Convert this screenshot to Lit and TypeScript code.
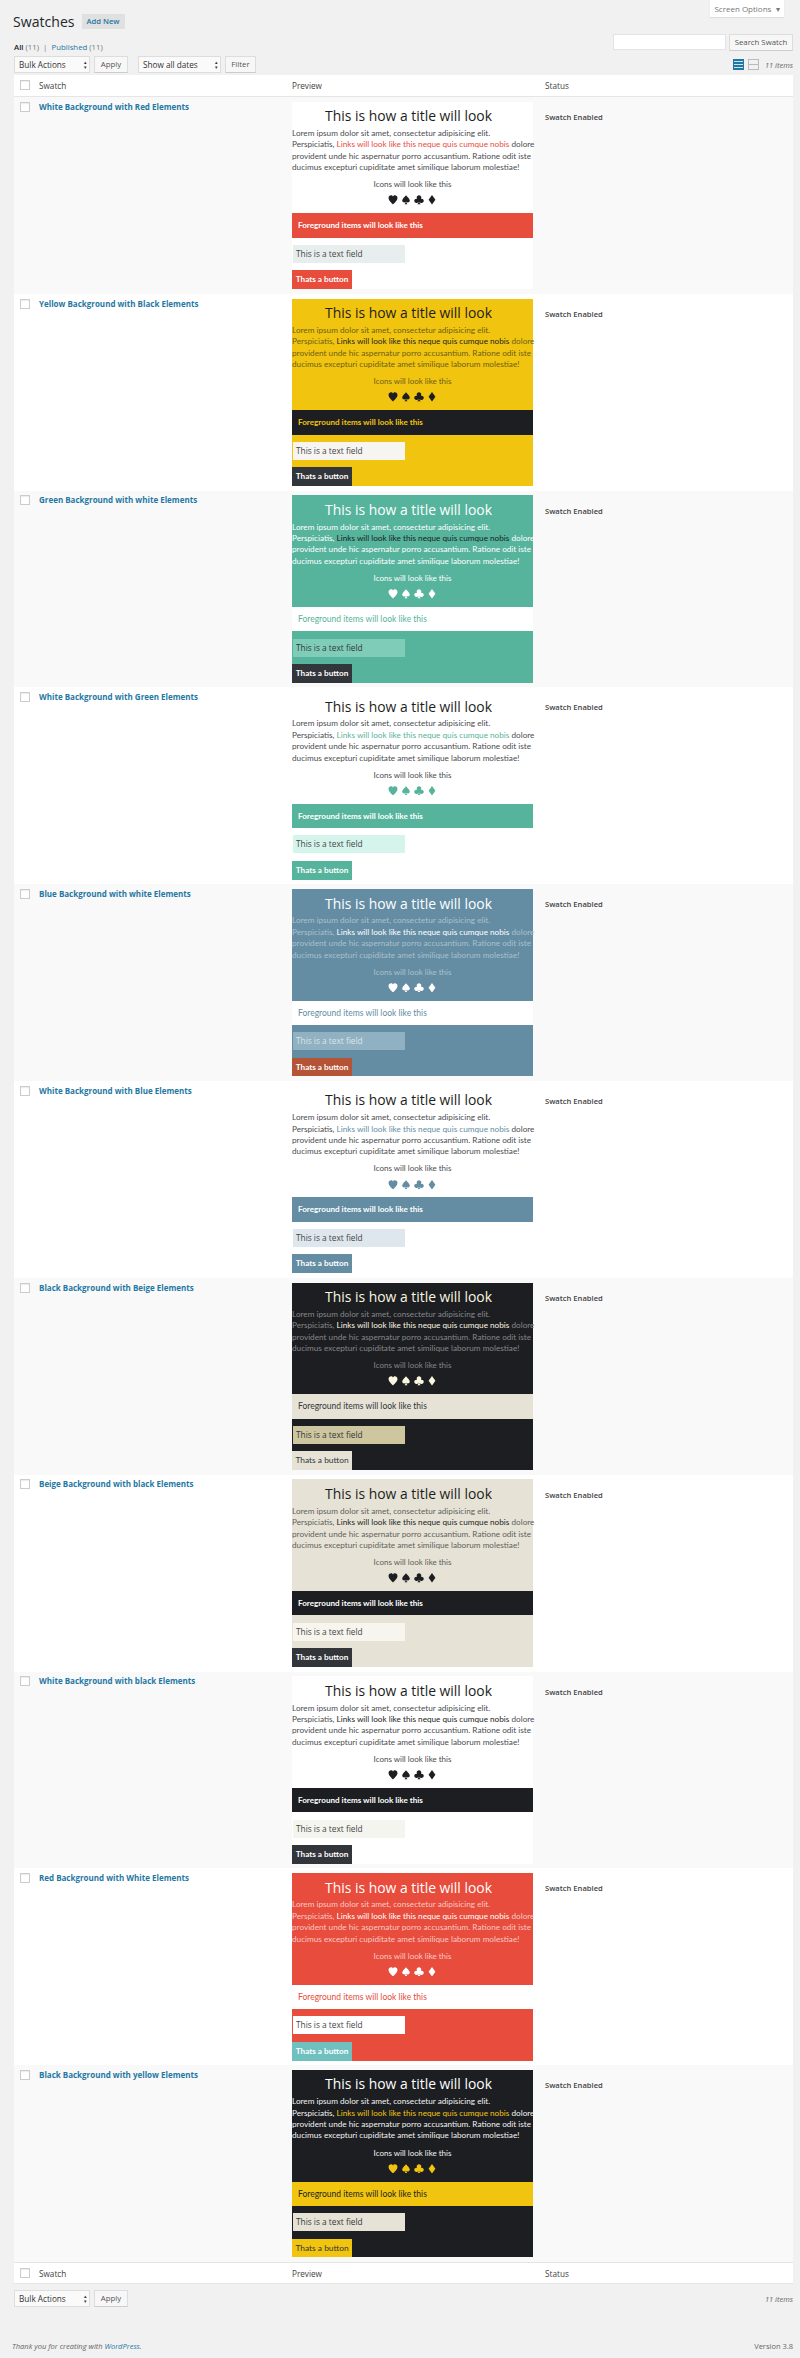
import { LitElement, html, css, svg } from 'lit';
import { customElement } from 'lit/decorators.js';

interface Swatch {
    name: string;
    bg: string; title: string; text: string; link: string; icon: string;
    band: string; bandText: string; field: string; fieldText: string;
    btn: string; btnText: string;
}

const swatches: Swatch[] = [
    { name: 'White Background with Red Elements', bg: '#fff', title: '#1c1e21', text: '#4a4c50', link: '#e74c3c', icon: '#1c1e21', band: '#e74c3c', bandText: '#fff', field: '#e8eeee', fieldText: '#444', btn: '#e74c3c', btnText: '#fff' },
    { name: 'Yellow Background with Black Elements', bg: '#f1c40f', title: '#1c1e21', text: '#6e5f17', link: '#1c1e21', icon: '#1c1e21', band: '#1c1e21', bandText: '#f1c40f', field: '#f7f5f2', fieldText: '#444', btn: '#32353a', btnText: '#fff' },
    { name: 'Green Background with white Elements', bg: '#56b39c', title: '#fff', text: '#fff', link: '#1c1e21', icon: '#fff', band: '#fff', bandText: '#56b39c', field: '#7fcdb9', fieldText: '#33353a', btn: '#32353a', btnText: '#fff' },
    { name: 'White Background with Green Elements', bg: '#fff', title: '#1c1e21', text: '#4a4c50', link: '#56b39c', icon: '#56b39c', band: '#56b39c', bandText: '#fff', field: '#d5f4ec', fieldText: '#444', btn: '#56b39c', btnText: '#fff' },
    { name: 'Blue Background with white Elements', bg: '#648da3', title: '#fff', text: '#a9c0cc', link: '#fff', icon: '#fff', band: '#fff', bandText: '#648da3', field: '#90b1c2', fieldText: '#dce6eb', btn: '#b55336', btnText: '#fff' },
    { name: 'White Background with Blue Elements', bg: '#fff', title: '#1c1e21', text: '#4a4c50', link: '#648da3', icon: '#648da3', band: '#648da3', bandText: '#fff', field: '#dde7ed', fieldText: '#444', btn: '#648da3', btnText: '#fff' },
    { name: 'Black Background with Beige Elements', bg: '#1c1e21', title: '#fbf6e0', text: '#85878a', link: '#fbf6e0', icon: '#fbf6e0', band: '#e6e3d6', bandText: '#33353a', field: '#cdc69f', fieldText: '#33353a', btn: '#e6e3d6', btnText: '#33353a' },
    { name: 'Beige Background with black Elements', bg: '#e6e3d6', title: '#1c1e21', text: '#5f5f5c', link: '#1c1e21', icon: '#1c1e21', band: '#1c1e21', bandText: '#fff', field: '#f7f5ee', fieldText: '#444', btn: '#32353a', btnText: '#fff' },
    { name: 'White Background with black Elements', bg: '#fff', title: '#1c1e21', text: '#4a4c50', link: '#1c1e21', icon: '#1c1e21', band: '#1c1e21', bandText: '#fff', field: '#f5f5f0', fieldText: '#444', btn: '#32353a', btnText: '#fff' },
    { name: 'Red Background with White Elements', bg: '#e74c3c', title: '#fff', text: '#f8c9c4', link: '#fff', icon: '#fff', band: '#fff', bandText: '#e74c3c', field: '#fff', fieldText: '#444', btn: '#6fc0bf', btnText: '#fff' },
    { name: 'Black Background with yellow Elements', bg: '#1c1e21', title: '#fff', text: '#f2f2f2', link: '#f1c40f', icon: '#f1c40f', band: '#f1c40f', bandText: '#1c1e21', field: '#e6e3d6', fieldText: '#33353a', btn: '#f1c40f', btnText: '#33353a' },
];

const suits = [
    svg`<path d="M5 10C3.5 8.3 0.3 6 0.3 3.2 0.3 1.4 1.6 0.3 3 0.3 3.9 0.3 4.6 0.8 5 1.6 5.4 0.8 6.1 0.3 7 0.3 8.4 0.3 9.7 1.4 9.7 3.2 9.7 6 6.5 8.3 5 10Z"/>`,
    svg`<path d="M5 0.2C6.2 2 9 3.6 9 5.9 9 7.3 7.9 8 7 8 6.3 8 5.8 7.7 5.4 7.2 5.5 8.2 5.9 9.2 6.6 9.8H3.4C4.1 9.2 4.5 8.2 4.6 7.2 4.2 7.7 3.7 8 3 8 2.1 8 1 7.3 1 5.9 1 3.6 3.8 2 5 0.2Z"/>`,
    svg`<path d="M5 0.2C6.4 0.2 7.4 1.3 7.4 2.5 7.4 3 7.2 3.5 7 3.9 8.6 3.6 10 4.6 10 6 10 7.4 8.9 8.3 7.8 8.3 6.9 8.3 6 7.8 5.5 7 5.6 8.2 6 9.2 6.8 9.8H3.2C4 9.2 4.4 8.2 4.5 7 4 7.8 3.1 8.3 2.2 8.3 1.1 8.3 0 7.4 0 6 0 4.6 1.4 3.6 3 3.9 2.8 3.5 2.6 3 2.6 2.5 2.6 1.3 3.6 0.2 5 0.2Z"/>`,
    svg`<path d="M5 0L8.6 5 5 10 1.4 5Z"/>`,
];

const listIcon = svg`<svg width="11" height="11" viewBox="0 0 11 11"><rect width="11" height="11" fill="#1f78a4"/><path d="M1 2.5h9M1 5.5h9M1 8.5h9" stroke="#cfe4ee" stroke-width="1"/></svg>`;
const excerptIcon = svg`<svg width="11" height="11" viewBox="0 0 11 11"><rect width="11" height="11" fill="#bbb"/><rect x="1" y="1" width="9" height="4" fill="#f1f1f1"/><rect x="1" y="6" width="9" height="4" fill="#f1f1f1"/></svg>`;

const isLight = (c: string) => c === '#fff' || c === '#f1c40f';

@customElement('swatch-preview')
export class SwatchPreview extends LitElement {
    static properties = { swatch: { attribute: false } };
    swatch!: Swatch;

    static styles = css`
        :host { display: block; width: 241px; }
        .preview {
            height: 187.4px;
            font-family: Lato, sans-serif;
            font-size: 8.2px;
            line-height: 11.4px;
        }
        h2 {
            margin: 0;
            padding: 5.5px 8px 0 0;
            height: 26.3px;
            box-sizing: border-box;
            font-family: "Open Sans", sans-serif;
            font-size: 13.9px;
            line-height: 18px;
            font-weight: 400;
            text-align: center;
        }
        p { margin: 0; white-space: nowrap; }
        .cap { margin-top: 5.7px; text-align: center; font-size: 8px; }
        .icons {
            display: flex;
            justify-content: center;
            gap: 3.3px;
            margin-top: 2px;
            height: 15px;
            align-items: center;
        }
        .icons svg { width: 10px; height: 9.5px; fill: currentColor; }
        .band {
            margin-top: 5.6px;
            height: 24.4px;
            padding-left: 6px;
            font-size: 8.5px;
            line-height: 24.4px;
            box-sizing: border-box;
        }
        .field {
            margin: 7.3px 0 7.3px 0.7px;
            width: 112px;
            height: 18px;
            padding-left: 3.3px;
            box-sizing: border-box;
            font-family: "Open Sans", sans-serif;
            font-size: 8.3px;
            line-height: 18px;
        }
        .btn {
            width: 60px;
            height: 18.8px;
            text-align: center;
            font-size: 8.4px;
            line-height: 18.8px;
        }
        .band.strong { font-size: 8.1px; font-weight: 700; }
        .btn.strong { font-size: 8.2px; font-weight: 700; }
    `;

    render() {
        const s = this.swatch;
        return html`
            <div class="preview" style="background:${s.bg};color:${s.text}">
                <h2 style="color:${s.title}">This is how a title will look</h2>
                <p>Lorem ipsum dolor sit amet, consectetur adipisicing elit.<br>Perspiciatis, <span style="color:${s.link}">Links will look like this neque quis cumque nobis</span> dolore<br>provident unde hic aspernatur porro accusantium. Ratione odit iste<br>ducimus excepturi cupiditate amet similique laborum molestiae!</p>
                <div class="cap">Icons will look like this</div>
                <div class="icons" style="color:${s.icon}">${suits.map((d) => html`<svg viewBox="0 0 10 10">${d}</svg>`)}</div>
                <div class="band ${isLight(s.bandText) ? 'strong' : ''}" style="background:${s.band};color:${s.bandText}">Foreground items will look like this</div>
                <div class="field" style="background:${s.field};color:${s.fieldText}">This is a text field</div>
                <div class="btn ${s.btnText === '#fff' ? 'strong' : ''}" style="background:${s.btn};color:${s.btnText}">Thats a button</div>
            </div>
        `;
    }
}

@customElement('app-root')
export class AppRoot extends LitElement {
    static styles = css`
        :host {
            display: block;
            position: relative;
            height: 2358px;
            background: #f1f1f1;
            font-family: "Open Sans", sans-serif;
            font-size: 7.8px;
            color: #444;
            overflow: hidden;
        }
        .wrap { padding: 0 7px 0 14px; }
        .screen-options {
            position: absolute;
            top: 0;
            right: 16px;
            width: 74px;
            height: 17px;
            background: #fff;
            box-shadow: 0 1px 1px rgba(0,0,0,.08);
            color: #777;
            font-size: 8px;
            line-height: 17px;
            text-align: center;
        }
        .head {
            display: flex;
            align-items: center;
            gap: 7px;
            height: 42px;
            margin-left: -1px;
        }
        h1 { margin: 0; font-size: 14.1px; font-weight: 400; color: #23282d; }
        .add {
            width: 43px;
            height: 15px;
            background: #e0e0e0;
            color: #1f78a4;
            font-weight: 600;
            font-size: 7.6px;
            line-height: 15px;
            text-align: center;
        }
        .subrow { display: flex; justify-content: space-between; height: 14px; }
        .subs { line-height: 10px; color: #777; }
        .subs b { color: #222; font-weight: 600; }
        .subs a { color: #1f78a4; }
        .search { display: flex; gap: 3px; margin-top: -8px; height: 16px; }
        .search i { display: block; width: 113px; height: 16px; background: #fff; box-sizing: border-box; border: 1px solid #e3e3e3; }
        .nav { display: flex; align-items: center; gap: 4px; height: 17px; }
        .sel {
            position: relative;
            box-sizing: border-box;
            height: 17px;
            background: #fafafa;
            border: 1px solid #ddd;
            padding-left: 4px;
            line-height: 15px;
            color: #333;
            font-size: 8.2px;
        }
        .sel::after {
            content: "\\25B4\\A\\25BE";
            white-space: pre;
            position: absolute;
            right: 2px;
            top: 3px;
            font-size: 5px;
            line-height: 4.5px;
            color: #333;
        }
        .btn {
            box-sizing: border-box;
            height: 17px;
            background: #f7f7f7;
            border: 1px solid #ddd;
            border-bottom-color: #ccc;
            line-height: 15px;
            text-align: center;
            color: #555;
        }
        .bulk { width: 76px; }
        .apply { width: 34px; }
        .dates { width: 83px; margin-left: 6px; }
        .filter { width: 31px; }
        .spacer { flex: 1; }
        .items { font-style: italic; color: #666; font-size: 7.5px; }
        .views { display: flex; gap: 4px; margin-right: 2px; }
        .table { margin-top: 2px; }
        .row {
            display: grid;
            grid-template-columns: 278px 253px 1fr;
        }
        .th {
            background: #fff;
            height: 22px;
            align-items: center;
            line-height: 22px;
            border-bottom: 1px solid #e5e5e5;
            box-sizing: border-box;
            font-size: 8.2px;
        }
        .name { display: flex; gap: 9px; padding-left: 6px; }
        .cb {
            flex: none;
            box-sizing: border-box;
            width: 10px;
            height: 10px;
            background: #fff;
            border: 1px solid #ccc;
            box-shadow: inset 0 1px 1px rgba(0,0,0,.08);
        }
        .th .cb { margin-top: 5px; }
        .item { height: 196.84px; box-sizing: border-box; padding-top: 4.7px; background: #fff; }
        .item.alt { background: #f9f9f9; }
        .item a { color: #1f78a4; font-weight: 700; line-height: 10px; font-size: 8px; }
        .status { font-size: 7.6px; font-weight: 600; line-height: 10px; padding-top: 10.3px; }
        .foot-th { border-top: 1px solid #e5e5e5; }
        .bottom { margin-top: 6px; }
        .footer {
            display: flex;
            justify-content: space-between;
            margin: 34px 0 0 -2px;
            font-size: 7.5px;
            color: #666;
        }
        .footer i a { color: #1f78a4; }
    `;

    render() {
        return html`
            <div class="screen-options">Screen Options &nbsp;▾</div>
            <div class="wrap">
                <div class="head">
                    <h1>Swatches</h1>
                    <div class="add">Add New</div>
                </div>
                <div class="subrow">
                    <div class="subs"><b>All</b> (11) &nbsp;|&nbsp; <a>Published</a> (11)</div>
                    <div class="search"><i></i><div class="btn" style="width:64px">Search Swatch</div></div>
                </div>
                <div class="nav">
                    <div class="sel bulk">Bulk Actions</div>
                    <div class="btn apply">Apply</div>
                    <div class="sel dates">Show all dates</div>
                    <div class="btn filter">Filter</div>
                    <div class="spacer"></div>
                    <div class="views">${listIcon}${excerptIcon}</div>
                    <div class="items">11 items</div>
                </div>
                <div class="table">
                    ${this.headerRow('')}
                    ${swatches.map((s, i) => html`
                        <div class="row item ${i % 2 === 0 ? 'alt' : ''}">
                            <div class="name"><div class="cb"></div><a>${s.name}</a></div>
                            <swatch-preview .swatch=${s}></swatch-preview>
                            <div class="status">Swatch Enabled</div>
                        </div>
                    `)}
                    ${this.headerRow('foot-th')}
                </div>
                <div class="nav bottom">
                    <div class="sel bulk">Bulk Actions</div>
                    <div class="btn apply">Apply</div>
                    <div class="spacer"></div>
                    <div class="items">11 items</div>
                </div>
                <div class="footer">
                    <i>Thank you for creating with <a>WordPress</a>.</i>
                    <span>Version 3.8</span>
                </div>
            </div>
        `;
    }

    private headerRow(extra: string) {
        return html`
            <div class="row th ${extra}">
                <div class="name"><div class="cb"></div><span>Swatch</span></div>
                <div>Preview</div>
                <div>Status</div>
            </div>
        `;
    }
}
